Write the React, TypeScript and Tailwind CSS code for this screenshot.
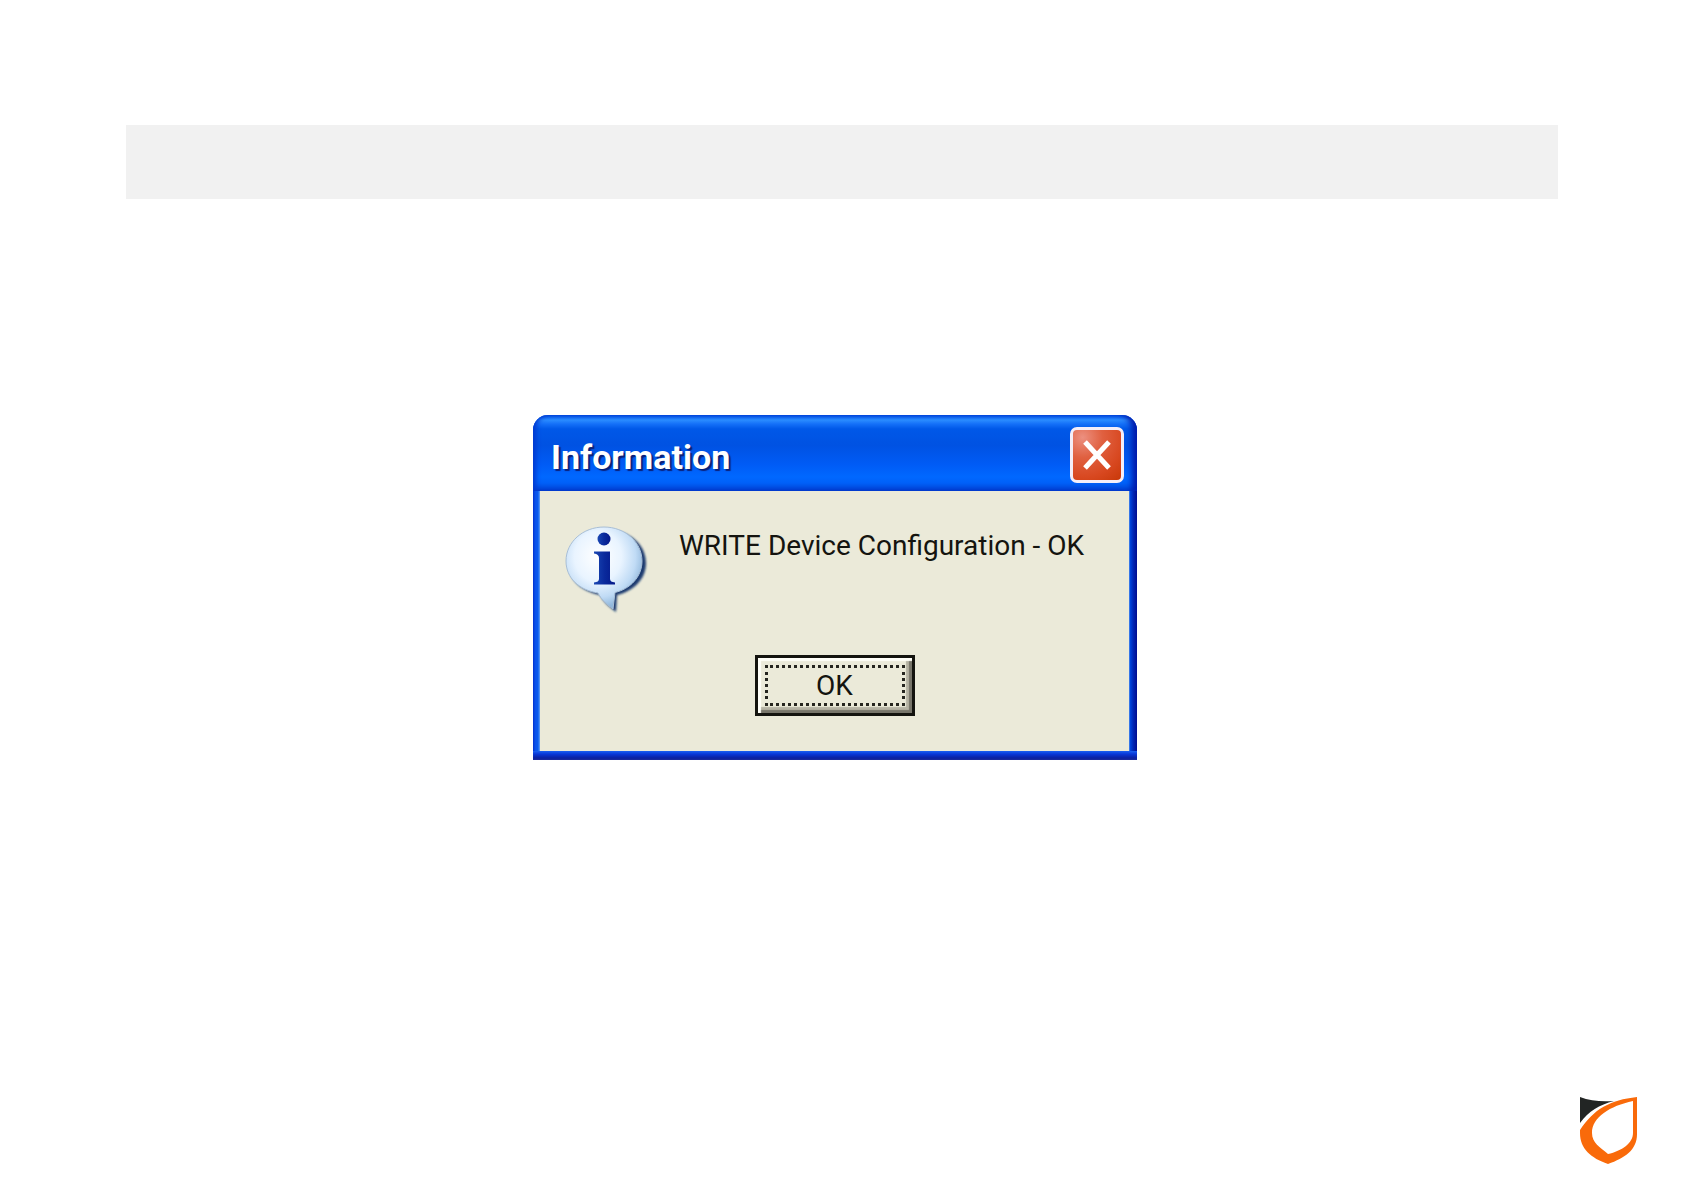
function InfoIcon() {
  return (
    <svg width="86" height="92" viewBox="0 0 86 92" aria-hidden="true" className="shrink-0">
      <defs>
        <radialGradient id="bubble" cx="42%" cy="36%" r="62%">
          <stop offset="0" stopColor="#ffffff" />
          <stop offset="0.5" stopColor="#e9f4ff" />
          <stop offset="0.8" stopColor="#c0dbf5" />
          <stop offset="1" stopColor="#92b8dc" />
        </radialGradient>
        <linearGradient id="letter" x1="0" x2="1" y1="0" y2="0">
          <stop offset="0" stopColor="#1a48b4" />
          <stop offset="0.5" stopColor="#0a2a9c" />
          <stop offset="1" stopColor="#04188a" />
        </linearGradient>
        <filter id="soft" x="-10%" y="-10%" width="120%" height="120%">
          <feGaussianBlur stdDeviation="1" />
        </filter>
      </defs>
      <path
        d="M44 5C66 5 83 19 83 38C83 54 71 66 54 70L53 87C46 82 40 76 37 70C18 66 6 55 6 39C6 19 23 5 44 5Z"
        fill="#1c3a70"
        filter="url(#soft)"
      />
      <path
        d="M41 2C62 2 79 17 79 36C79 52 67 64 52 67.500L50 84C43 79 38 74 35 68C16 65 3 53 3 36C3 17 20 2 41 2Z"
        fill="url(#bubble)"
        stroke="#a9bfd6"
        strokeWidth="1"
      />
      <circle cx="41" cy="14" r="6.500" fill="url(#letter)" />
      <path
        d="M31 26.500H47V54Q47 57 52 57.500V59.500H31V57.500Q36 57 36 54V33Q36 29 31 28.500Z"
        fill="url(#letter)"
      />
    </svg>
  );
}

function CloseIcon() {
  return (
    <svg width="30" height="32" viewBox="0 0 30 32" aria-hidden="true">
      <path d="M3 3L27 29M27 3L3 29" stroke="#fff" strokeWidth="5" />
    </svg>
  );
}

function ShieldLogo() {
  return (
    <svg width="57" height="67" viewBox="0 0 57 67" role="img" aria-label="Company logo">
      <path d="M0 0C10 4 22 5 34 4C19 8 9 14 0 26Z" fill="#222524" />
      <path
        fillRule="evenodd"
        d="M57 0V37C57 53 45 61 28 67C11 61 0 52 0 36V33C14 12 30 3 57 0ZM53 4C30 9 12 20 12 36C12 46 20 50 28 57C42 54 53 46 53 36Z"
        fill="#f96a0a"
      />
    </svg>
  );
}

export default function App() {
  return (
    <div className="flex min-h-screen flex-col bg-white pt-[125px] font-[Roboto,sans-serif]">
      <header className="mx-[7.5%] h-[74px] bg-[#f1f1f1]" />

      <main className="mt-[216px] flex justify-center pr-[14px]">
        <section
          role="dialog"
          aria-labelledby="dialog-title"
          className="flex w-full max-w-[604px] flex-col rounded-t-[15px] bg-[linear-gradient(90deg,#0030d0_0,#0a50e8_2px,#0a5cf0_5px,#6aa4f0_7px,#6aa4f0_calc(100%_-_8px),#0048e0_calc(100%_-_7px),#0028b8_calc(100%_-_4px),#000c90_100%)]"
        >
          <div className="flex h-[76px] items-center justify-between rounded-t-[15px] bg-[linear-gradient(180deg,#0050e6_0,#2a8cff_5px,#1470f8_9px,#0058e8_14px,#0052e2_30px,#005cf6_50px,#0068ff_62px,#0060f8_68px,#0040d0_76px)] pr-[13px] pl-[18px] shadow-[inset_5px_0_5px_-2px_#0038d0,inset_-8px_0_6px_-3px_#0018a8]">
            <h1
              id="dialog-title"
              className="pt-2 text-[34px] leading-[40px] font-bold text-white [text-shadow:2px_2px_1px_#0a2078]"
            >
              Information
            </h1>
            <button
              type="button"
              aria-label="Close"
              className="mt-1 flex h-[56px] w-[54px] items-center justify-center rounded-[7px] border-[3px] border-[#f4eef8] bg-[radial-gradient(circle_at_20%_15%,#ec9080_0,#e06040_35%,#d84820_70%,#c83808_100%)]"
            >
              <CloseIcon />
            </button>
          </div>

          <div className="mr-[8px] ml-[7px] flex h-[260px] flex-col items-center bg-[#ebead9]">
            <div className="flex w-full items-start pt-[34px] pl-[23px]">
              <InfoIcon />
              <p className="ml-[30px] text-[28px] leading-[42px] whitespace-nowrap text-[#14140f]">
                WRITE Device Configuration - OK
              </p>
            </div>
            <button
              type="button"
              className="mt-[38px] flex h-[61px] w-[160px] border-[3px] border-[#14140f] p-[7px] text-[28px] leading-[34px] text-[#14140f] shadow-[inset_3px_3px_1px_#fffff8,inset_-3px_-3px_1px_#77756a,inset_-6px_-6px_1px_#b5b3a4]"
            >
              <span className="flex h-full w-full items-center justify-center border-[3px] border-dotted border-[#25251f]">
                OK
              </span>
            </button>
          </div>
          <div className="h-[9px] bg-[linear-gradient(180deg,#1a60f0_0,#0838d8_3px,#0a20a0_7px,#1c2c9c_9px)]" />
        </section>
      </main>

      <footer className="mt-auto flex justify-end pr-[47px] pb-[27px]">
        <ShieldLogo />
      </footer>
    </div>
  );
}
